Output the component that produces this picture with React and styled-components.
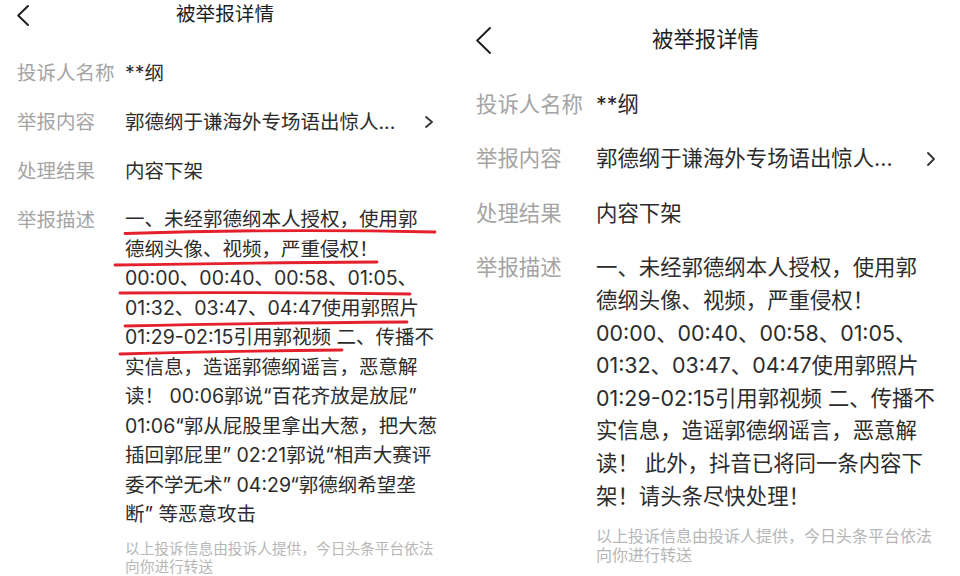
import React from "react";
import styled, { createGlobalStyle } from "styled-components";

const GlobalStyle = createGlobalStyle`
  html, body {
    margin: 0;
    padding: 0;
    background: #fff;
  }
  body {
    width: 960px;
    height: 576px;
    overflow: hidden;
    font-family: Inter, "Noto Sans CJK SC", "Noto Sans", sans-serif;
  }
`;

const Screens = styled.div`
  display: flex;
  align-items: flex-start;
  width: 960px;
  height: 576px;
  overflow: hidden;
  background: #fff;
`;

const Screen = styled.section`
  box-sizing: border-box;
  flex: none;
  width: ${(p) => p.$m.width}px;
  padding: ${(p) => p.$m.top}px ${(p) => p.$m.right}px 0 ${(p) => p.$m.left}px;
`;

const Header = styled.header`
  display: grid;
  grid-template-columns: 1fr auto 1fr;
  align-items: center;
  height: ${(p) => p.$m.headerH}px;
  margin-bottom: ${(p) => p.$m.headerGap}px;
`;

const Back = styled.svg`
  display: block;
  justify-self: start;
`;

const Title = styled.h1`
  margin: 0;
  font-size: ${(p) => p.$m.titleFs}px;
  line-height: 1.2;
  font-weight: 400;
  color: #1e1e1e;
  white-space: nowrap;
`;

const Row = styled.div`
  display: flex;
  align-items: flex-start;
  font-size: ${(p) => p.$m.fs}px;
  line-height: ${(p) => p.$m.lh}px;
  margin-bottom: ${(p) => p.$m.rowGap}px;
`;

const Label = styled.div`
  flex: none;
  width: ${(p) => p.$m.labelW}px;
  color: #a4a4a4;
  white-space: nowrap;
`;

const Value = styled.div`
  position: relative;
  flex: 1;
  color: #2c2c2c;
  white-space: nowrap;
`;

const Line = styled.div`
  white-space: nowrap;
  line-height: ${(p) => p.$m.descLh}px;
`;

const More = styled.svg`
  display: block;
  flex: none;
  align-self: center;
`;

const Marks = styled.svg`
  position: absolute;
  left: 0;
  top: 0;
  overflow: visible;
  pointer-events: none;
`;

const Note = styled.p`
  margin: ${(p) => p.$m.noteGap}px 0 0 ${(p) => p.$m.labelW}px;
  font-size: ${(p) => p.$m.noteFs}px;
  line-height: ${(p) => p.$m.noteLh}px;
  color: #b6b6b6;
  white-space: nowrap;
`;

const Description = styled(Row)`
  margin-bottom: 0;
`;

const small = {
  width: 450,
  top: 0,
  left: 17,
  right: 17,
  headerH: 30,
  headerGap: 28,
  titleFs: 19.6,
  fs: 19.5,
  lh: 30,
  descLh: 29.5,
  rowGap: 19,
  labelW: 108,
  noteFs: 14.7,
  noteLh: 18.5,
  noteGap: 10,
  back: [12, 21],
  more: [8, 12],
};

const large = {
  width: 510,
  top: 24,
  left: 26,
  right: 25,
  headerH: 32,
  headerGap: 31.7,
  titleFs: 21.4,
  fs: 21.4,
  lh: 32.6,
  descLh: 32.6,
  rowGap: 22,
  labelW: 120,
  noteFs: 16,
  noteLh: 19,
  noteGap: 15,
  back: [15, 27],
  more: [8, 14],
};

const common = [
  "一、未经郭德纲本人授权，使用郭",
  "德纲头像、视频，严重侵权！",
  "00:00、00:40、00:58、01:05、",
  "01:32、03:47、04:47使用郭照片",
  "01:29-02:15引用郭视频 二、传播不",
  "实信息，造谣郭德纲谣言，恶意解",
];

const leftLines = [
  ...common,
  "读！ 00:06郭说“百花齐放是放屁”",
  "01:06“郭从屁股里拿出大葱，把大葱",
  "插回郭屁里” 02:21郭说“相声大赛评",
  "委不学无术” 04:29“郭德纲希望垄",
  "断” 等恶意攻击",
];

const rightLines = [...common, "读！ 此外，抖音已将同一条内容下", "架！请头条尽快处理！"];

// hand-drawn red strokes under the first five lines
const strokes = [
  "M0 28.5 Q 150 23.5 310 27",
  "M-10 60 Q 110 58 252 57",
  "M-5 88 Q 140 87 285 89",
  "M0 121 Q 130 118 282 117",
  "M-5 149 Q 100 146 217 145",
];

function Detail({ m, lines, marked }) {
  return (
    <Screen $m={m}>
      <Header $m={m}>
        <Back width={m.back[0]} height={m.back[1]} viewBox={`0 0 ${m.back[0]} ${m.back[1]}`}>
          <polyline
            points={`${m.back[0] - 1},1 1.2,${m.back[1] / 2} ${m.back[0] - 1},${m.back[1] - 1}`}
            fill="none"
            stroke="#1e1e1e"
            strokeWidth="1.9"
            strokeLinecap="round"
            strokeLinejoin="round"
          />
        </Back>
        <Title $m={m}>被举报详情</Title>
        <span />
      </Header>

      <Row $m={m}>
        <Label $m={m}>投诉人名称</Label>
        <Value>**纲</Value>
      </Row>
      <Row $m={m}>
        <Label $m={m}>举报内容</Label>
        <Value>郭德纲于谦海外专场语出惊人...</Value>
        <More width={m.more[0]} height={m.more[1]} viewBox={`0 0 ${m.more[0]} ${m.more[1]}`}>
          <polyline
            points={`1,1 ${m.more[0] - 1},${m.more[1] / 2} 1,${m.more[1] - 1}`}
            fill="none"
            stroke="#333"
            strokeWidth="1.8"
            strokeLinecap="round"
            strokeLinejoin="round"
          />
        </More>
      </Row>
      <Row $m={m}>
        <Label $m={m}>处理结果</Label>
        <Value>内容下架</Value>
      </Row>
      <Description $m={m}>
        <Label $m={m}>举报描述</Label>
        <Value>
          {lines.map((t, i) => (
            <Line key={i} $m={m}>
              {t}
            </Line>
          ))}
          {marked && (
            <Marks width="320" height="160">
              {strokes.map((d, i) => (
                <path key={i} d={d} fill="none" stroke="#e3202b" strokeWidth="2.8" strokeLinecap="round" />
              ))}
            </Marks>
          )}
        </Value>
      </Description>
      <Note $m={m}>
        以上投诉信息由投诉人提供，今日头条平台依法
        <br />
        向你进行转送
      </Note>
    </Screen>
  );
}

export default function App() {
  return (
    <>
      <GlobalStyle />
      <Screens>
        <Detail m={small} lines={leftLines} marked />
        <Detail m={large} lines={rightLines} />
      </Screens>
    </>
  );
}
